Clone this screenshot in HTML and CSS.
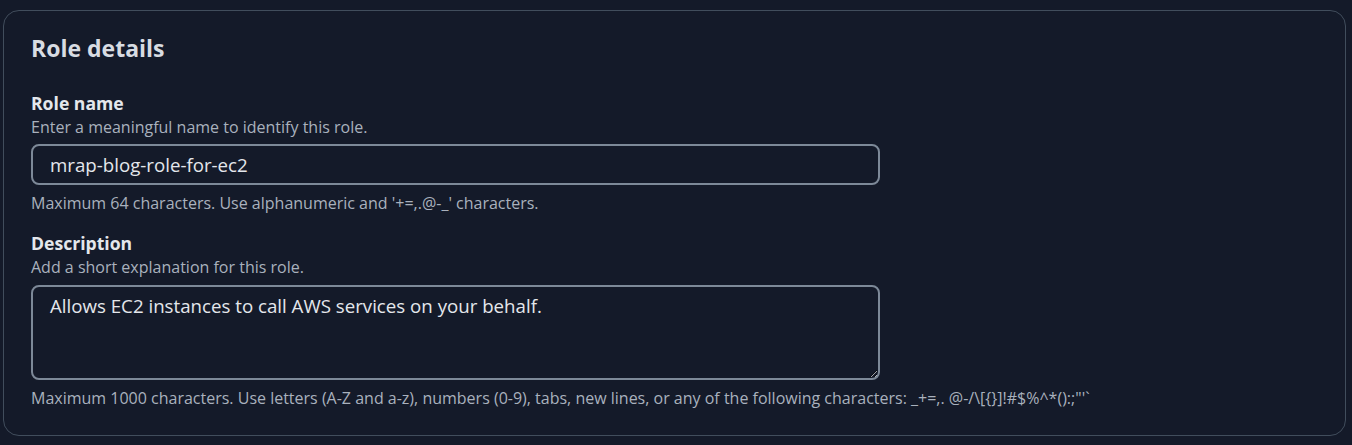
FILE: index.html
```html
<!DOCTYPE html>
<html lang="en">
<head>
    <meta charset="UTF-8">
    <meta name="viewport" content="width=device-width, initial-scale=1.0">
    <title>Role details</title>
    <link rel="stylesheet" href="styles.css">
</head>
<body>
    <div class="panel">
        <h2>Role details</h2>

        <div class="field">
            <label for="roleName">Role name</label>
            <div class="hint">Enter a meaningful name to identify this role.</div>
            <input type="text" id="roleName" value="mrap-blog-role-for-ec2">
            <div class="constraint">Maximum 64 characters. Use alphanumeric and '+=,.@-_' characters.</div>
        </div>

        <div class="field">
            <label for="roleDesc">Description</label>
            <div class="hint">Add a short explanation for this role.</div>
            <textarea id="roleDesc">Allows EC2 instances to call AWS services on your behalf.</textarea>
            <div class="constraint">Maximum 1000 characters. Use letters (A-Z and a-z), numbers (0-9), tabs, new lines, or any of the following characters: _+=,. @-/\[{}]!#$%^*():;"'`</div>
        </div>
    </div>
</body>
</html>
```

FILE: styles.css
```css
:root { --bg: #141a29; --line: #414d5c; --field: #7d8998; --fg: #e4e7ec; --muted: #a9b1bd; }

* {
    box-sizing: border-box;
    margin: 0;
    padding: 0;
}

body {
    background: var(--bg);
    color: var(--fg);
    font-family: 'Open Sans', 'Noto Sans', sans-serif;
    padding: 10px 6px 10px 3px;
}

.panel {
    border: 1px solid var(--line);
    border-radius: 16px;
    padding: 23px 27px 25px;
}

h2 {
    font-size: 23px;
    line-height: 28px;
    font-weight: 700;
    color: #d8dce2;
    margin-bottom: 29px;
}

.field + .field {
    margin-top: 16px;
}

label {
    display: block;
    font-size: 17.6px;
    font-weight: 700;
    line-height: 24px;
    color: var(--fg);
}

.hint, .constraint {
    font-size: 16px;
    line-height: 24px;
    color: var(--muted);
    white-space: nowrap;
}

.constraint {
    margin-top: 6px;
}

input, textarea {
    display: block;
    width: 849px;
    font-family: inherit;
    font-size: 18.7px;
    color: var(--fg);
    background: var(--bg);
    border: 2px solid var(--field);
    border-radius: 8px;
    outline: none;
    padding: 0 17px;
}

input {
    height: 41px;
    margin-top: 5px;
}

textarea {
    height: 95px;
    margin-top: 6px;
    resize: vertical;
    line-height: 24px;
    padding-top: 7px;
}
```
